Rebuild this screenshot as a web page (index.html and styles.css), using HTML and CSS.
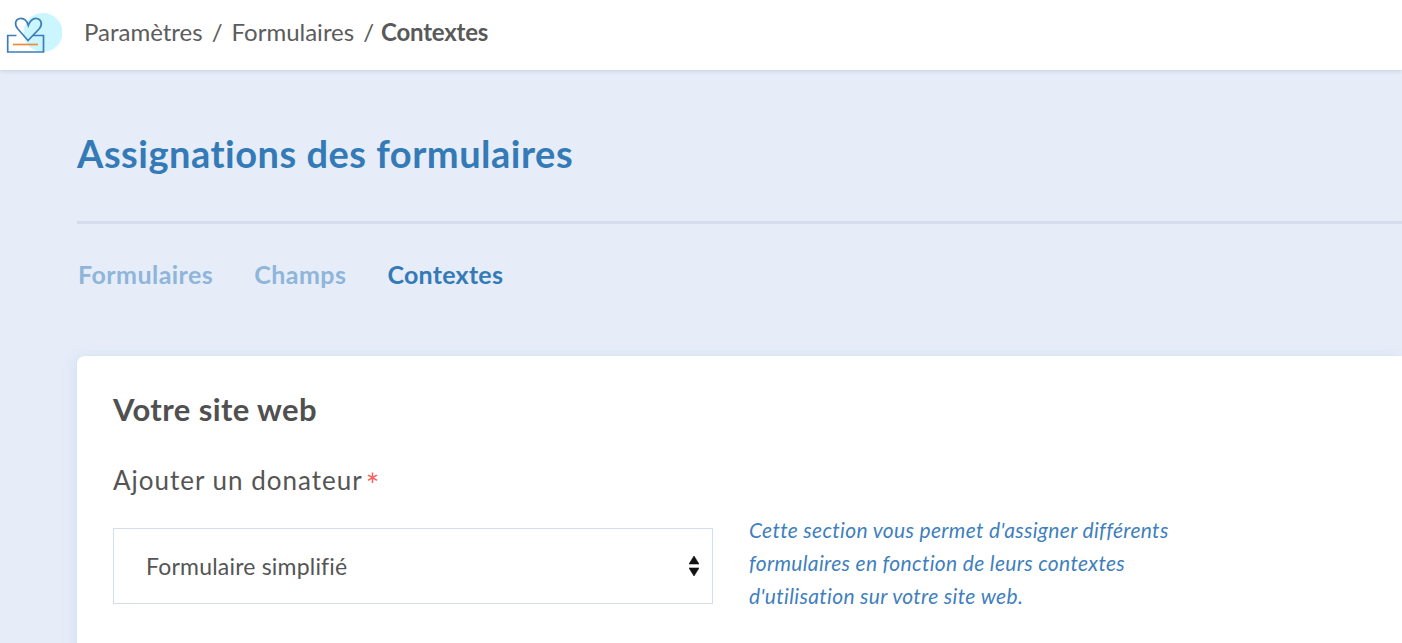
FILE: index.html
```html
<!DOCTYPE html>
<html lang="fr">
<head>
<meta charset="utf-8">
<title>Assignations des formulaires</title>
<link rel="stylesheet" href="styles.css">
</head>
<body>
<header class="topbar">
  <svg class="logo" width="62" height="60" viewBox="0 0 62 60" aria-hidden="true">
    <circle cx="43" cy="32.500" r="19.500" fill="#ccf6fe"/>
    <path d="M16.500 35.500H7.700V52H43.500V35.500H33" fill="none" stroke="#3d7dba" stroke-width="1.700"/>
    <path d="M28 40.500L17.500 28.500C14 24 15.500 19 20 18.500C24 18 27 21 28.300 25.500C30 21 33 18 36.800 18.500C41 19 43 24 39.500 28.500Z" fill="none" stroke="#3d7dba" stroke-width="1.700"/>
    <path d="M13 44.500H38" stroke="#f08a3c" stroke-width="1.700"/>
  </svg>
  <nav class="crumbs">
    <span>Paramètres</span><span class="sep">/</span><span>Formulaires</span><span class="sep">/</span><strong>Contextes</strong>
  </nav>
</header>
<main class="content">
  <h1 class="title">Assignations des formulaires</h1>
  <div class="tabs">
    <a class="tab">Formulaires</a>
    <a class="tab">Champs</a>
    <a class="tab active">Contextes</a>
  </div>
  <section class="card">
    <h2 class="card-title">Votre site web</h2>
    <div class="label">Ajouter un donateur<span class="req">*</span></div>
    <div class="field-row">
      <div class="select">
        <span>Formulaire simplifié</span>
        <svg class="arrows" width="10" height="20" viewBox="0 0 10 20" aria-hidden="true">
          <path d="M5 0L10 8H0Z M0 12H10L5 20Z" fill="#111" stroke="#111" stroke-width=".6" stroke-linejoin="round"/>
        </svg>
      </div>
      <p class="help">Cette section vous permet d'assigner différents formulaires en fonction de leurs contextes d'utilisation sur votre site web.</p>
    </div>
  </section>
</main>
</body>
</html>
```

FILE: styles.css
```css
* { box-sizing: border-box; }
html, body { margin: 0; height: 643px; overflow: hidden; }
body {
  background: #e6edf8;
  font-family: "Lato", "Open Sans", sans-serif;
  color: #555;
}
.topbar {
  height: 70px;
  background: #fff;
  display: flex;
  align-items: center;
  box-shadow: 0 1px 4px rgba(120, 135, 170, .3);
}
.logo { margin-right: 22px; align-self: flex-start; }
.crumbs { font-size: 24px; color: #5c5c5c; display: flex; align-items: center; margin-top: -8px; }
.crumbs strong { font-weight: 700; letter-spacing: -.2px; margin-left: -2px; color: #595959; }
.sep { margin: 0 9px; }
.content { padding: 0 0 0 77px; }
.title {
  margin: 0;
  height: 154px;
  padding-top: 58px;
  border-bottom: 3px solid #d6dcea;
  font-size: 38px;
  line-height: 50px;
  letter-spacing: .5px;
  font-weight: 700;
  color: #337ab7;
}
.tabs { display: flex; gap: 41px; padding: 34px 0 0 1px; height: 132px; }
.tab { font-size: 25px; line-height: 32px; letter-spacing: .45px; font-weight: 700; color: #8fb5da; }
.tab.active { color: #337ab7; letter-spacing: .25px; }
.card {
  background: #fff;
  border-radius: 8px 0 0 0;
  padding: 34px 36px;
  height: 300px;
  box-shadow: -3px 0 12px rgba(190, 210, 240, .45);
}
.card-title { margin: 0; font-size: 31px; line-height: 38px; letter-spacing: .4px; font-weight: 700; color: #505050; }
.label { margin-top: 35px; font-size: 26px; line-height: 34px; letter-spacing: 1px; color: #555; }
.req { color: #f4605e; margin-left: 3px; font-size: 32px; line-height: 20px; vertical-align: -7px; }
.field-row { display: flex; margin-top: 31px; gap: 36px; align-items: flex-start; }
.select {
  width: 600px;
  height: 76px;
  border: 1px solid #d3deeb;
  display: flex;
  align-items: center;
  justify-content: space-between;
  padding: 0 13px 0 32px;
  font-size: 23px;
  letter-spacing: .2px;
  color: #555;
}
.help {
  margin: -15px 0 0;
  width: 450px;
  font-size: 21px;
  line-height: 33px;
  letter-spacing: .33px;
  font-style: italic;
  color: #3f7fbd;
}
```
